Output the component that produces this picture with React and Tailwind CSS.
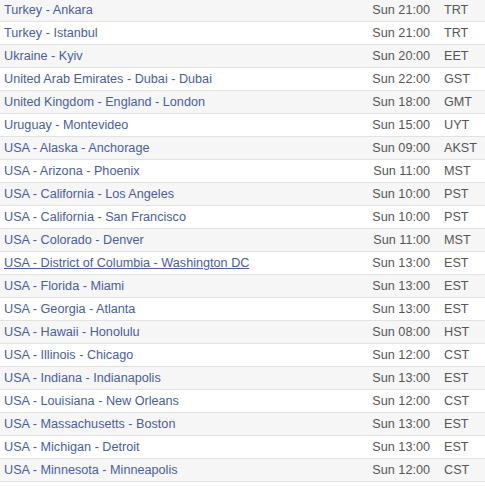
const rows = [
  ["Turkey - Ankara", "Sun 21:00", "TRT"],
  ["Turkey - Istanbul", "Sun 21:00", "TRT"],
  ["Ukraine - Kyiv", "Sun 20:00", "EET"],
  ["United Arab Emirates - Dubai - Dubai", "Sun 22:00", "GST"],
  ["United Kingdom - England - London", "Sun 18:00", "GMT"],
  ["Uruguay - Montevideo", "Sun 15:00", "UYT"],
  ["USA - Alaska - Anchorage", "Sun 09:00", "AKST"],
  ["USA - Arizona - Phoenix", "Sun 11:00", "MST"],
  ["USA - California - Los Angeles", "Sun 10:00", "PST"],
  ["USA - California - San Francisco", "Sun 10:00", "PST"],
  ["USA - Colorado - Denver", "Sun 11:00", "MST"],
  ["USA - District of Columbia - Washington DC", "Sun 13:00", "EST", true],
  ["USA - Florida - Miami", "Sun 13:00", "EST"],
  ["USA - Georgia - Atlanta", "Sun 13:00", "EST"],
  ["USA - Hawaii - Honolulu", "Sun 08:00", "HST"],
  ["USA - Illinois - Chicago", "Sun 12:00", "CST"],
  ["USA - Indiana - Indianapolis", "Sun 13:00", "EST"],
  ["USA - Louisiana - New Orleans", "Sun 12:00", "CST"],
  ["USA - Massachusetts - Boston", "Sun 13:00", "EST"],
  ["USA - Michigan - Detroit", "Sun 13:00", "EST"],
  ["USA - Minnesota - Minneapolis", "Sun 12:00", "CST"],
];

export default function App() {
  return (
    <div
      className="w-[485px] h-[486px] overflow-hidden bg-white text-[12.65px]"
      style={{ fontFamily: '"Liberation Sans", Arial, sans-serif' }}
    >
      <div className="-mt-px">
        {rows.map(([place, time, tz, hover], i) => (
          <div
            key={place}
            className={`flex items-center h-[23px] border-b border-[#e2e2e2] ${
              i % 2 === 0 ? "bg-[#f6f6f6]" : "bg-white"
            }`}
          >
            <a
              href="#"
              className={`pl-[4px] flex-1 min-w-0 whitespace-nowrap text-[#4b5d9c] leading-none ${
                hover ? "underline" : "no-underline"
              }`}
            >
              {place}
            </a>
            <div className="w-[80px] shrink-0 text-right whitespace-nowrap text-[#555555] leading-none">{time}</div>
            <div className="w-[55px] shrink-0 pl-[14px] whitespace-nowrap text-[#555555] leading-none">{tz}</div>
          </div>
        ))}
      </div>
    </div>
  );
}
